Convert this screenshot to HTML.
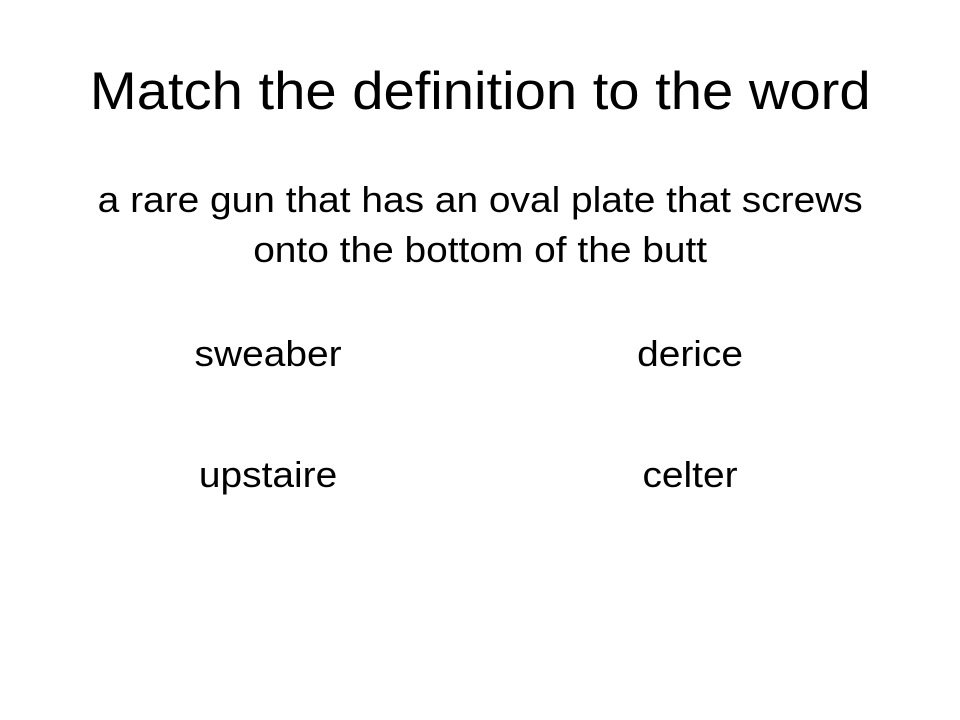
<!DOCTYPE html>
<html><head><meta charset="utf-8"><style>
html,body{margin:0;padding:0;background:#fff;}
body{width:960px;height:720px;position:relative;overflow:hidden;font-family:"Liberation Sans",sans-serif;color:#000;}
.t{position:absolute;white-space:nowrap;line-height:1;}
</style></head><body>
<div class="t" style="left:0;width:960px;text-align:center;top:65px;font-size:53px;"><span style="display:inline-block;transform:scaleX(1.06);">Match the definition to the word</span></div>
<div class="t" style="left:0;width:960px;text-align:center;top:182px;font-size:36px;"><span style="display:inline-block;transform:scaleX(1.08);">a rare gun that has an oval plate that screws</span></div>
<div class="t" style="left:0;width:960px;text-align:center;top:232px;font-size:36px;"><span style="display:inline-block;transform:scaleX(1.08);">onto the bottom of the butt</span></div>
<div class="t" style="left:168px;width:200px;text-align:center;top:336px;font-size:36px;"><span style="display:inline-block;transform:scaleX(1.08);">sweaber</span></div>
<div class="t" style="left:590px;width:200px;text-align:center;top:336px;font-size:36px;"><span style="display:inline-block;transform:scaleX(1.08);">derice</span></div>
<div class="t" style="left:168px;width:200px;text-align:center;top:457px;font-size:36px;"><span style="display:inline-block;transform:scaleX(1.08);">upstaire</span></div>
<div class="t" style="left:590px;width:200px;text-align:center;top:457px;font-size:36px;"><span style="display:inline-block;transform:scaleX(1.08);">celter</span></div>
</body></html>
